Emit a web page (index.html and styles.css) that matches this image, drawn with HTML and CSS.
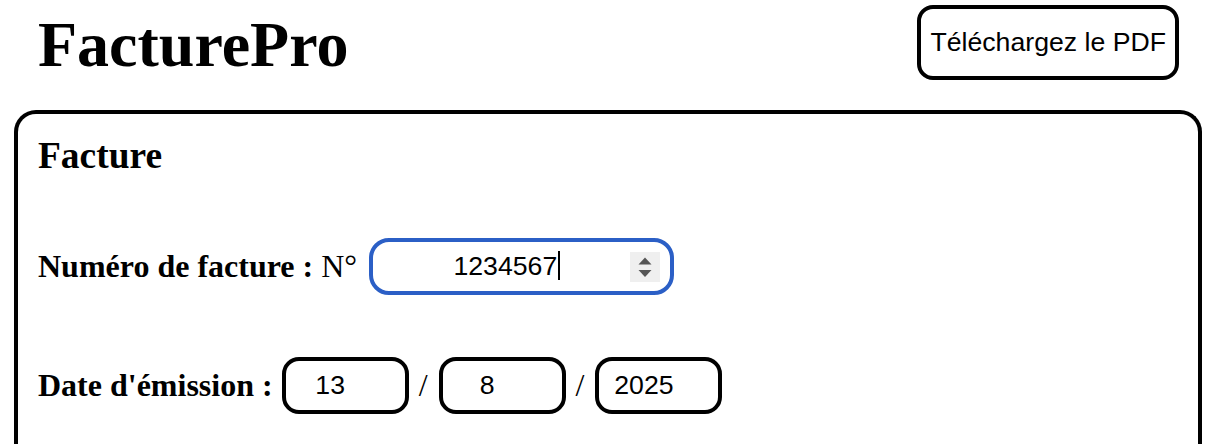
FILE: index.html
```html
<!DOCTYPE html>
<html lang="fr">
<head>
<meta charset="utf-8">
<title>FacturePro</title>
<link rel="stylesheet" href="styles.css">
</head>
<body>
  <header class="topbar">
    <h1 class="brand">FacturePro</h1>
    <button class="pdf-btn" type="button">Téléchargez le PDF</button>
  </header>
  <section class="card">
    <h3 class="card-title">Facture</h3>
    <div class="row row-number">
      <span class="label">Numéro de facture :</span>
      <span class="prefix">N°</span>
      <div class="field field-focus field-wide">
        <span class="field-text">1234567<span class="caret"></span></span>
        <span class="spin">
          <svg width="30" height="30" viewBox="0 0 30 30" aria-hidden="true">
            <polygon points="8.5,12.5 21.5,12.5 15,5.5" fill="#555"/>
            <polygon points="8.5,18 21.5,18 15,25" fill="#555"/>
          </svg>
        </span>
      </div>
    </div>
    <div class="row row-date">
      <span class="label">Date d'émission :</span>
      <div class="field field-date">
        <span class="field-text">13</span>
        <span class="spin-space"></span>
      </div>
      <span class="sep">/</span>
      <div class="field field-date">
        <span class="field-text">8</span>
        <span class="spin-space"></span>
      </div>
      <span class="sep">/</span>
      <div class="field field-date">
        <span class="field-text">2025</span>
        <span class="spin-space"></span>
      </div>
    </div>
  </section>
</body>
</html>
```

FILE: styles.css
```css
html, body {
  margin: 0;
  padding: 0;
  background: #ffffff;
  color: #000000;
}

body {
  font-family: "Liberation Serif", "Times New Roman", serif;
  width: 1224px;
  height: 444px;
  overflow: hidden;
}

.topbar {
  display: flex;
  justify-content: space-between;
  align-items: flex-start;
  padding: 5px 45px 0 38px;
  height: 110px;
  box-sizing: border-box;
}

.brand {
  margin: 8px 0 0 0;
  font-size: 64px;
  line-height: 64px;
  font-weight: bold;
}

.pdf-btn {
  font-family: "Liberation Sans", Arial, sans-serif;
  font-size: 26.67px;
  line-height: 31px;
  color: #000;
  background: #fff;
  border: 4px solid #000;
  border-radius: 16px;
  padding: 18px 9px 18px 9px;
  margin: 0;
  cursor: pointer;
}

.card {
  margin: 0 22px 0 14px;
  border: 4px solid #000;
  border-bottom: none;
  border-radius: 22px 22px 0 0;
  padding: 20px 20px 0 20px;
  height: 334px;
  box-sizing: border-box;
  overflow: hidden;
}

.card-title {
  margin: 0;
  font-size: 37.44px;
  line-height: 43px;
  font-weight: bold;
}

.row {
  display: flex;
  align-items: center;
}

.row-number {
  margin-top: 61px;
}

.row-date {
  margin-top: 62px;
}

.label {
  font-size: 32px;
  line-height: 37px;
  font-weight: bold;
  flex-shrink: 0;
}

.prefix {
  font-size: 32px;
  line-height: 37px;
  margin-left: 8px;
  margin-right: 12px;
}

.field {
  display: flex;
  align-items: center;
  flex-shrink: 0;
  height: 57px;
  box-sizing: border-box;
  border: 4px solid #000;
  border-radius: 17px;
  padding: 0 10px;
  font-family: "Liberation Sans", Arial, sans-serif;
  font-size: 26.67px;
}

.field-text {
  flex: 1;
  text-align: center;
  line-height: 31px;
  white-space: nowrap;
}

.field-focus {
  border-color: #2b5fc6;
  border-radius: 20px;
}

.field-wide {
  width: 305px;
}

.field-date {
  width: 127px;
}

.row-date .label {
  margin-right: 9px;
}

.caret {
  display: inline-block;
  width: 1.5px;
  height: 29px;
  background: #000;
  vertical-align: -5px;
  margin-left: 1px;
}

.spin {
  width: 30px;
  height: 30px;
  background: #efefef;
  display: flex;
  flex-shrink: 0;
}

.spin-space {
  width: 30px;
  height: 30px;
  flex-shrink: 0;
}

.sep {
  font-size: 32px;
  line-height: 37px;
  margin: 0 11px 0 10px;
}
```
